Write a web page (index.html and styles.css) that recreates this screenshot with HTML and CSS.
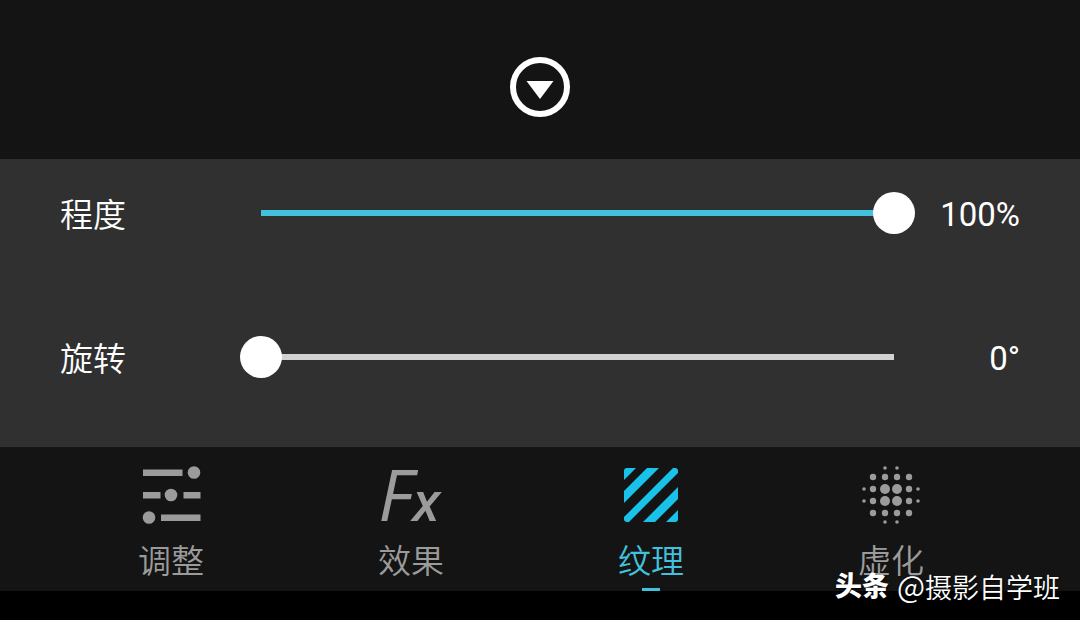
FILE: index.html
```html
<!DOCTYPE html>
<html lang="zh-CN">
<head>
  <meta charset="UTF-8" />
  <meta name="viewport" content="width=device-width, initial-scale=1.0" />
  <title>纹理</title>
  <link rel="stylesheet" href="styles.css">
</head>
<body>

  <!-- Collapse -->
  <header class="top">
    <button class="collapse" type="button" aria-label="收起">
      <svg width="60" height="60" viewBox="0 0 60 60">
        <circle cx="30" cy="30" r="27" fill="none" stroke="#fff" stroke-width="6" />
        <path d="M16.5 24h27L30 42z" fill="#fff" />
      </svg>
    </button>
  </header>

  <!-- Sliders -->
  <main class="panel">
    <div class="row">
      <label for="degree">程度</label>
      <input class="range full" id="degree" type="range" min="0" max="100" value="100">
      <output for="degree">100%</output>
    </div>
    <div class="row">
      <label for="rotate">旋转</label>
      <input class="range" id="rotate" type="range" min="0" max="360" value="0">
      <output for="rotate">0°</output>
    </div>
  </main>

  <!-- Tabs -->
  <nav class="tabs">
    <button class="tab" type="button">
      <svg class="icon" width="60" height="60" viewBox="0 0 60 60" fill="currentColor">
        <path d="M2 4.500h39.500v6.500H2zM2 27h17.500v6.500H2zM42.500 27h17v6.500h-17zM20 49.500h39.500v6.500H20z" />
        <circle cx="53" cy="7.500" r="6.3" />
        <circle cx="30" cy="30" r="6.3" />
        <circle cx="8" cy="52.500" r="6.3" />
      </svg>
      <span class="name">调整</span>
    </button>
    <button class="tab" type="button">
      <span class="icon fx"><span class="fx-big">F</span><span class="fx-small">x</span></span>
      <span class="name">效果</span>
    </button>
    <button class="tab active" type="button">
      <svg class="icon" width="60" height="60" viewBox="0 0 60 60">
        <clipPath id="square"><rect x="3" y="3" width="54" height="54" rx="3" /></clipPath>
        <g clip-path="url(#square)" fill="#18c2e8">
          <path d="M3 3h12L3 15zM26 3h12L3 38V26zM57 22v12L34 57H22zM57 45v12H45z" />
          <path d="M54 6L6 54" stroke="#18c2e8" stroke-width="7" stroke-linecap="round" />
        </g>
      </svg>
      <span class="name">纹理</span>
    </button>
    <button class="tab" type="button">
      <svg class="icon" width="60" height="60" viewBox="0 0 60 60" fill="currentColor">
        <g>
          <circle cx="24" cy="3" r="1.8" /><circle cx="36" cy="3" r="1.8" />
          <circle cx="24" cy="57" r="1.8" /><circle cx="36" cy="57" r="1.8" />
          <circle cx="3" cy="24" r="1.8" /><circle cx="3" cy="36" r="1.8" />
          <circle cx="57" cy="24" r="1.8" /><circle cx="57" cy="36" r="1.8" />
        </g>
        <g>
          <circle cx="12" cy="12" r="3.2" /><circle cx="24" cy="12" r="3.2" />
          <circle cx="36" cy="12" r="3.2" /><circle cx="48" cy="12" r="3.2" />
          <circle cx="12" cy="24" r="3.2" /><circle cx="48" cy="24" r="3.2" />
          <circle cx="12" cy="36" r="3.2" /><circle cx="48" cy="36" r="3.2" />
          <circle cx="12" cy="48" r="3.2" /><circle cx="24" cy="48" r="3.2" />
          <circle cx="36" cy="48" r="3.2" /><circle cx="48" cy="48" r="3.2" />
        </g>
        <g>
          <circle cx="24" cy="24" r="5" /><circle cx="36" cy="24" r="5" />
          <circle cx="24" cy="36" r="5" /><circle cx="36" cy="36" r="5" />
        </g>
      </svg>
      <span class="name">虚化</span>
    </button>
  </nav>

  <div class="watermark"><b>头条</b><span><span class="at">@</span>摄影自学班</span></div>

</body>
</html>
```
FILE: styles.css
```css
* {
  margin: 0;
  padding: 0;
  box-sizing: border-box;
}

body {
  position: relative;
  min-height: 100vh;
  background: #000;
  color: #fff;
  font-family: Roboto, "Noto Sans CJK SC", sans-serif;
  font-size: 33px;
}

button {
  border: 0;
  background: none;
  color: inherit;
  font: inherit;
  cursor: pointer;
}

.top {
  display: flex;
  justify-content: center;
  padding: 57px 0 42px;
  background: #141414;
}

.collapse,
.collapse svg {
  display: block;
}

/* Sliders */
.panel {
  display: grid;
  gap: 36px;
  padding: 0 60px 36px;
  background: #303030;
}

.row {
  display: grid;
  grid-template-columns: 180px 1fr 105px;
  align-items: center;
  height: 108px;
}

.row label {
  font-weight: 350;
}

.row output {
  padding-top: 2px;
  text-align: right;
}

.range {
  -webkit-appearance: none;
  appearance: none;
  width: 100%;
  height: 42px;
  background: linear-gradient(#d2d0d3, #d2d0d3) center / calc(100% - 42px) 6px no-repeat;
}

.range.full {
  background-image: linear-gradient(#42c1dc, #42c1dc);
}

.range::-webkit-slider-thumb {
  -webkit-appearance: none;
  width: 42px;
  height: 42px;
  border-radius: 50%;
  background: #fff;
}

/* Tabs */
.tabs {
  display: grid;
  grid-template-columns: repeat(4, 1fr);
  height: 144px;
  padding: 0 69px 0 51px;
  background: #141414;
  color: #9b9b9b;
}

.tab {
  display: flex;
  flex-direction: column;
  align-items: center;
  padding-top: 18px;
}

.icon {
  display: block;
  height: 60px;
}

.name {
  margin-top: 13px;
  line-height: 48px;
  font-weight: 350;
}

.tab.active {
  color: #42c1dc;
}

.tab.active::after {
  content: "";
  width: 18px;
  height: 3px;
  margin-top: 2px;
  background: #42c1dc;
}

.fx {
  padding-right: 4px;
  font-family: "Open Sans", sans-serif;
  font-style: italic;
  font-weight: 500;
  line-height: 56px;
}

.fx-big {
  font-size: 72px;
}

.fx-small {
  font-size: 54px;
  font-weight: 600;
}

/* Watermark */
.watermark {
  position: absolute;
  right: 20px;
  bottom: 13px;
  display: flex;
  gap: 8px;
  font-family: "Noto Sans CJK SC", sans-serif;
  font-size: 27px;
  font-weight: 350;
  line-height: 40px;
  text-shadow: 1px 1px 2px #000;
}

.watermark b {
  font-weight: 900;
}

.at {
  font-size: 30px;
}
```
